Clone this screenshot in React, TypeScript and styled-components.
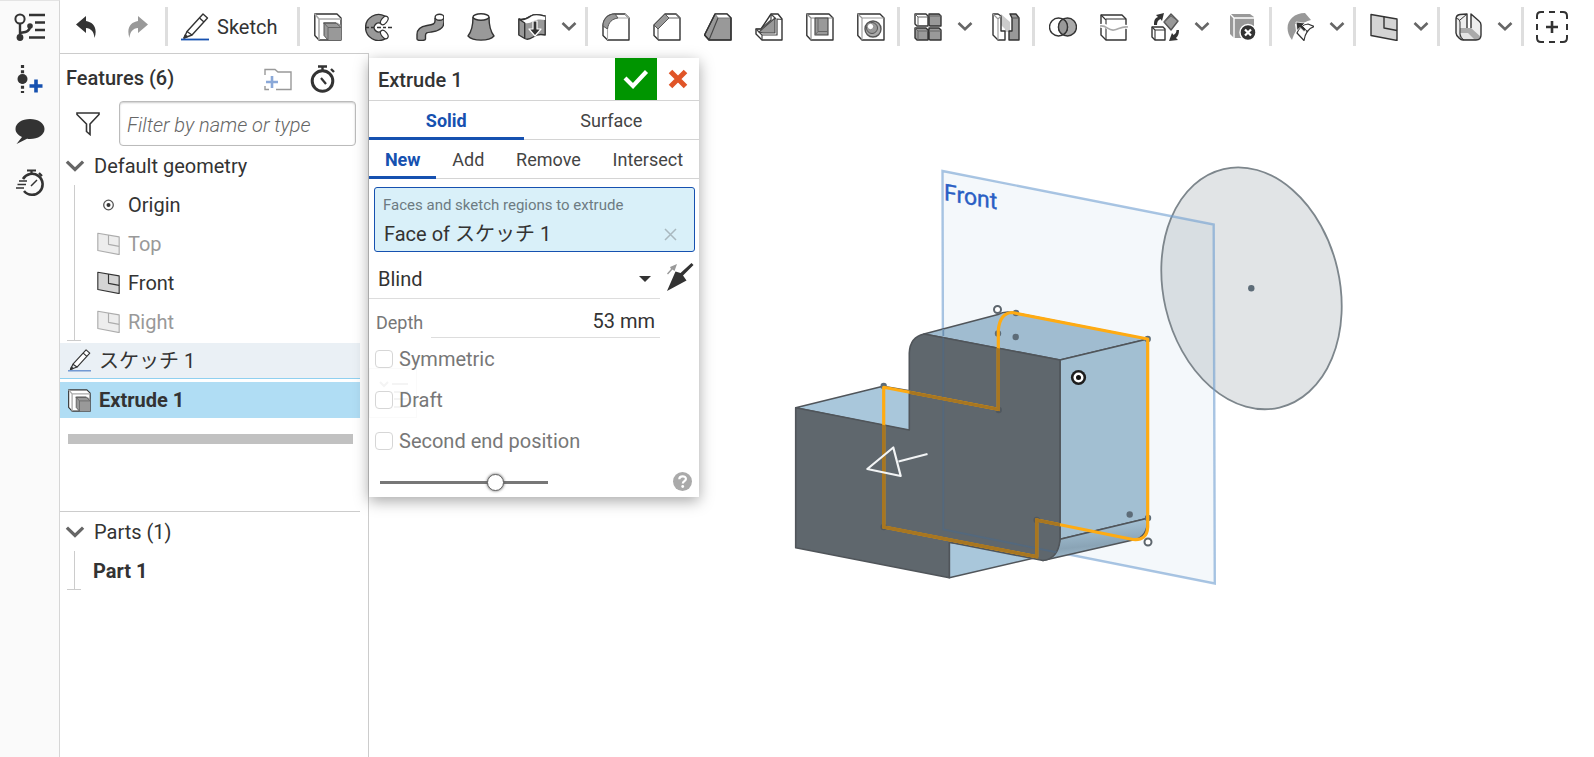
import React from "react";
import styled, { createGlobalStyle, css } from "styled-components";

const INK = "#333333";
const BLUE = "#1651b0";
const LINE = "#cccccc";

const GlobalStyle = createGlobalStyle`
  *, *::before, *::after { box-sizing: border-box; }
  body {
    margin: 0;
    background: #fff;
    color: ${INK};
    font: 400 20px/24px Roboto, "Noto Sans CJK JP", sans-serif;
  }
  button, input, select { font: inherit; color: inherit; }
  button { background: none; border: 0; padding: 0; cursor: pointer; }
  h1, h2, ul { margin: 0; padding: 0; font-weight: 400; font-size: 20px; }
  ul { list-style: none; }
`;

/* ---------- layout ---------- */

const Shell = styled.div`
  display: flex;
  min-height: 100vh;
`;

const Rail = styled.nav`
  display: flex;
  flex-direction: column;
  flex: none;
  width: 60px;
  background: #fafafa;
  border-top: 1px solid #e4e4e4;
  border-right: 1px solid #d6d6d6;
`;

const RailButton = styled.button`
  display: grid;
  place-items: center;
  height: 52px;
`;

const Main = styled.div`
  display: flex;
  flex-direction: column;
  flex: 1;
  min-width: 0;
`;

const Toolbar = styled.div`
  display: flex;
  align-items: center;
  height: 53px;
`;

const ToolButton = styled.button<{ $history?: boolean }>`
  display: grid;
  place-items: center;
  flex: none;
  width: ${(p) => (p.$history ? 52 : 51)}px;
  height: 52px;
`;

const MenuButton = styled.button`
  display: grid;
  place-items: center;
  flex: none;
  width: 27px;
  height: 52px;
  padding-right: 3px;
`;

const SketchButton = styled.button`
  display: flex;
  align-items: center;
  flex: none;
  gap: 8px;
  height: 52px;
  padding: 0 19px 0 11px;
`;

const Divider = styled.span`
  flex: none;
  width: 3px;
  height: 39px;
  margin: 0 2px 0 1px;
  background: #dedede;
`;

const Workspace = styled.div`
  display: flex;
  flex: 1;
`;

const Panel = styled.aside`
  display: flex;
  flex-direction: column;
  flex: none;
  width: 309px;
  border-top: 1px solid ${LINE};
  border-right: 1px solid ${LINE};
`;

const Viewport = styled.main`
  position: relative;
  display: flex;
  flex: 1;
  min-width: 0;
`;

const Scene = styled.svg`
  display: block;
  flex: 1;
  min-width: 0;
  width: 100%;
`;

/* ---------- feature list ---------- */

const PanelHeader = styled.header`
  display: flex;
  align-items: center;
  height: 47px;
  padding: 0 32px 0 6px;
  gap: 18px;
`;

const PanelTitle = styled.h2`
  flex: 1;
  font-weight: 500;
`;

const HeaderIcon = styled.button`
  display: grid;
  place-items: center;
  padding-top: 3px;
`;

const FilterRow = styled.div`
  display: flex;
  align-items: center;
  gap: 19px;
  padding: 0 12px 0 16px;
`;

const FilterInput = styled.input`
  flex: 1;
  min-width: 0;
  height: 45px;
  padding: 2px 7px 0;
  border: 1px solid #bbb;
  border-radius: 4px;
  box-shadow: inset 0 1px 2px #ccc;
  outline: 0;
  &::placeholder {
    color: #666;
    font-size: 20px;
    font-style: italic;
    font-weight: 300;
    opacity: 1;
  }
`;

const GroupToggle = styled.button`
  display: flex;
  align-items: center;
  gap: 9px;
  width: 100%;
  height: 39px;
  padding-left: 5px;
  text-align: left;
`;

const Branch = styled.ul`
  position: relative;
  margin: 0 0 2px 14px;
  border-left: 1px solid ${LINE};
  &::after {
    content: "";
    position: absolute;
    left: -8px;
    bottom: 0;
    width: 14px;
    height: 1px;
    background: ${LINE};
  }
`;

const BranchItem = styled.li<{ $muted?: boolean; $strong?: boolean }>`
  display: flex;
  align-items: center;
  gap: 8px;
  height: 39px;
  padding-left: ${(p) => (p.$strong ? 18 : 22)}px;
  color: ${(p) => (p.$muted ? "#999" : INK)};
  font-weight: ${(p) => (p.$strong ? 700 : 400)};
  svg { opacity: ${(p) => (p.$muted ? 0.4 : 1)}; }
`;

const FeatureRow = styled.li<{ $active?: boolean }>`
  display: flex;
  align-items: center;
  gap: 8px;
  width: 300px;
  height: 36px;
  padding-left: 8px;
  margin-bottom: 3px;
  ${(p) =>
    p.$active
      ? css`background: #b0ddf4; font-weight: 700;`
      : css`background: #eaf0f5; border-bottom: 1px solid #8fd0f0;`}
`;

const FeatureScroll = styled.div`
  width: 300px;
  height: 366px;
  border-bottom: 1px solid ${LINE};
`;

const RollbackBar = styled.div`
  height: 10px;
  margin: 16px 7px 0 8px;
  background: #c1c1c1;
`;

/* ---------- extrude dialog ---------- */

const Dialog = styled.form`
  position: absolute;
  z-index: 1;
  top: 5px;
  left: 0;
  width: 330px;
  background: #fff;
  box-shadow: 0 4px 14px rgba(0, 0, 0, 0.35);
`;

const DialogHeader = styled.header`
  display: flex;
  height: 43px;
  border-bottom: 1px solid #d4d4d4;
`;

const DialogTitle = styled.h1`
  flex: 1;
  padding-left: 9px;
  line-height: 44px;
  font-weight: 500;
`;

const HeaderButton = styled.button<{ $accept?: boolean }>`
  display: grid;
  place-items: center;
  width: 42px;
  height: 42px;
  background: ${(p) => (p.$accept ? "#009500" : "transparent")};
`;

const Tabs = styled.div`
  display: flex;
  height: 39px;
  border-bottom: 1px solid #d4d4d4;
`;

const Tab = styled.button<{ $active?: boolean; $pad: number }>`
  flex: 1 1 auto;
  height: 39px;
  padding: 4px ${(p) => p.$pad}px 0;
  border-bottom: 3px solid transparent;
  font-size: 18px;
  color: #444;
  ${(p) =>
    p.$active &&
    css`
      border-color: ${BLUE};
      color: ${BLUE};
      font-weight: 700;
    `}
`;

const Selection = styled.div`
  height: 65px;
  margin: 8px 4px 0 5px;
  padding: 5px 17px 0 8px;
  border: 1px solid ${BLUE};
  border-radius: 3px;
  background: #d9f0f9;
`;

const SelectionLabel = styled.div`
  font-size: 15px;
  color: #6d7b82;
`;

const SelectionItem = styled.div`
  display: flex;
  align-items: center;
  justify-content: space-between;
  height: 34px;
  padding-left: 1px;
`;

const EndRow = styled.div`
  display: flex;
  align-items: center;
  gap: 6px;
  margin-top: 7px;
  padding-right: 5px;
`;

const SelectWrap = styled.label`
  display: flex;
  align-items: center;
  flex: 1;
  height: 40px;
  padding-right: 9px;
  border-bottom: 1px solid #ddd;
`;

const Select = styled.select`
  flex: 1;
  appearance: none;
  height: 39px;
  margin-right: -20px;
  padding: 0 20px 0 9px;
  border: 0;
  background: transparent;
  outline: 0;
`;

const DepthRow = styled.label`
  display: flex;
  align-items: stretch;
  gap: 8px;
  height: 39px;
  padding: 4px 39px 0 7px;
  color: #777;
  font-size: 18px;
  line-height: 40px;
`;

const DepthInput = styled.input`
  flex: 1;
  min-width: 0;
  padding: 2px 5px 0 0;
  border: 0;
  border-bottom: 1px solid #ddd;
  outline: 0;
  color: ${INK};
  font-size: 20px;
  text-align: right;
`;

const CheckRow = styled.label`
  display: flex;
  align-items: center;
  gap: 6px;
  height: 41px;
  padding-left: 6px;
  color: #777;
`;

const CheckBox = styled.input`
  appearance: none;
  width: 18px;
  height: 18px;
  margin: 0;
  border: 1px solid #d6d6d6;
  border-radius: 4px;
  background: #fff;
`;

const DialogFooter = styled.footer`
  display: flex;
  align-items: center;
  justify-content: space-between;
  height: 36px;
  padding: 4px 7px 0 11px;
`;

const Slider = styled.input`
  appearance: none;
  width: 168px;
  height: 18px;
  margin: 2px 0 0;
  background: linear-gradient(#777, #777) center / 100% 3px no-repeat;
  &::-webkit-slider-thumb {
    appearance: none;
    width: 17px;
    height: 17px;
    border: 1px solid #666;
    border-radius: 50%;
    background: #fff;
    box-shadow: 0 0 3px #555;
  }
`;

const HelpButton = styled.button`
  display: grid;
  place-items: center;
`;

const ListGhost = styled.span`
  position: absolute;
  z-index: -1;
  left: 0;
  top: 310px;
  width: 48px;
  height: 50px;
  border: 1px solid #fafafa;
  pointer-events: none;
`;

/* ---------- icons ---------- */

type IconProps = { size?: number; children: React.ReactNode };

const Icon = ({ size = 28, children }: IconProps) => (
  <svg
    width={size}
    height={size}
    viewBox="0 0 28 28"
    fill="none"
    stroke={INK}
    strokeWidth="1.4"
    strokeLinejoin="round"
    aria-hidden="true"
  >
    {children}
  </svg>
);

const Chevron = ({ wide }: { wide?: boolean }) => (
  <svg width={wide ? 20 : 16} height={wide ? 14 : 11} viewBox="0 0 16 11" fill="none" aria-hidden="true">
    <path d="M1.5 2 8 8.3 14.5 2" stroke="#666" strokeWidth="2.6" />
  </svg>
);

const G = "#999";

const ExtrudeIcon = ({ size }: { size?: number }) => (
  <Icon size={size}>
    <path d="M.8 1H23l4 4v22H5l-4.200-4.500Z" fill="#fff" />
    <path d="M.8 1 5 6v21M5 6h22" stroke="#aaa" strokeWidth="1.600" />
    <path d="M10 9.500h13l4 2.500v15H14l-4-4.500Z" fill={G} stroke="none" />
    <path d="m10 10 4 4.500V27m0-12.500h13M10 10h12l5 4.500" stroke="#666" strokeWidth="1" />
    <path d="M10 10v12.500l4 4.500M9 10h13" stroke="#555" strokeWidth="1" />
  </Icon>
);

const RevolveIcon = () => (
  <Icon>
    <path d="M20 3.200A13 13 0 1 0 20 25.800L16.500 18a4.500 4.500 0 1 1 0-7Z" fill={G} />
    <ellipse cx="19.300" cy="7.500" rx="2.800" ry="4.800" transform="rotate(40 19.300 7.500)" fill="#fff" strokeWidth="1.200" />
    <ellipse cx="19.300" cy="21.500" rx="2.800" ry="4.800" transform="rotate(-40 19.300 21.500)" fill="#fff" strokeWidth="1.200" />
    <path d="M1 14.500h3m2 0h3m3 0h4m2 0h3m2 0h4" />
  </Icon>
);

const SweepIcon = () => (
  <Icon>
    <path d="M19 5v3c0 3-2 3.500-8 4.500-6 1-10 3-10 9V26c0 2 8 2 8.500 0v-3.500c0-3 2-3 6-3.500 8-1 12.500-4 12.500-10V4" fill={G} />
    <ellipse cx="23.500" cy="4.300" rx="4.400" ry="3" fill="#fff" />
  </Icon>
);

const LoftIcon = () => (
  <Icon>
    <path d="M6 4c0 8-1 14-5 19 5 5.500 21 5.500 26 0-4-5-5-11-5-19" fill={G} />
    <ellipse cx="14" cy="4" rx="8" ry="3.200" fill="#fff" />
  </Icon>
);

const ThickenIcon = () => (
  <Icon>
    <path d="M.8 6c5 2 9-1 12-3 5-3 9-1 14.400 0v19c-5-1-9-.5-12 2-3 2-6 3-8.500 1.500L.8 22Z" fill={G} />
    <path d="M.8 6c5 2 9-1 12-3 5-3 9-1 14.400 0v4c-5-1-9-.5-12 1-3 2-5 2.500-8.500 2Z" fill="#fff" stroke="none" />
    <path d="M.8 6c5 2 9-1 12-3 5-3 9-1 14.400 0M.8 6l5.900 4v15" />
    <path d="M15 8h4v8h4l-6 7-6-7h4Z" fill={INK} stroke="#fff" strokeWidth="1.200" />
  </Icon>
);

const FilletIcon = () => (
  <Icon>
    <path d="M1 13C1 6 6 1 13 1h10l4 4v22H5.500L1 22.500Z" fill="#fff" />
    <path d="M1 13C1 6 6 1 13 1l3 4C10 6 6.500 9 5.500 16Z" fill={G} stroke="#555" strokeWidth="1" />
    <path d="M16 5h11m-4-4 4 4M5.500 16v11" stroke="#aaa" strokeWidth="1.100" />
  </Icon>
);

const ChamferIcon = () => (
  <Icon>
    <path d="M1 12 12 1h11l4 4v22H5.500L1 22.500Z" fill="#fff" />
    <path d="M1 12 12 1l4 4L5 16Z" fill={G} stroke="#555" strokeWidth="1" />
    <path d="M16 5h11m-4-4 4 4M5 16v11" stroke="#666" strokeWidth="1.100" />
  </Icon>
);

const DraftIcon = () => (
  <Icon>
    <path d="M11 1h12l4 4v22H5l-4.500-5Z" fill={G} />
    <path d="m11 1 3 4h13l-4-4Z" fill="#fff" stroke="#777" strokeWidth="1" />
    <path d="M5 27l9-22" stroke="#444" strokeWidth="1.100" />
    <path d="M11 1h12l4 4v22H5l-4.500-5Z" strokeWidth="1.200" />
  </Icon>
);

const RibIcon = () => (
  <Icon>
    <path d="M16 1h7l4 5v21H7l-6-6v-5h5Z" fill="#fff" />
    <path d="M4 19 20 5v15H8Z" fill={G} stroke="#444" strokeWidth="1.100" />
    <path d="M16 1v6L6 16H1l6 6m0 0v5m0-5h15V6l5 .5M16 1l5 5" stroke="#444" strokeWidth="1.200" />
  </Icon>
);

const ShellIcon = () => (
  <Icon>
    <path d="M.8 1H23l4 4v22H5l-4.200-4.500Z" fill="#fff" />
    <path d="M.8 1 5 5v22M5 5h22" stroke="#888" strokeWidth="1.100" />
    <path d="M9 5h13v17H9Z" fill={G} stroke="#444" strokeWidth="1.100" />
    <path d="M12 5v13.500h10M9 22l3-3.500" stroke="#666" strokeWidth="1" />
  </Icon>
);

const HoleIcon = () => (
  <Icon>
    <path d="M.8 1H23l4 4v22H5l-4.200-4.500Z" fill="#fff" />
    <path d="M.8 1 5 5v22M5 5h22" stroke="#999" strokeWidth="1.100" />
    <circle cx="16" cy="16" r="8" fill="#aaa" stroke="#555" />
    <circle cx="15" cy="15" r="5.500" fill={G} stroke="#555" strokeWidth="1" />
    <circle cx="13.500" cy="13.500" r="3.200" fill="#fff" stroke="#888" strokeWidth="1" />
  </Icon>
);

const PatternIcon = () => (
  <Icon>
    <path d="M1 1h11l2 2v10H3l-2-2Z" fill="#fff" />
    <path d="M15 1h10l2 2v10H16l-1-1ZM1 15h11l2 2v10H3l-2-2ZM15 15h10l2 2v10H16l-1-1Z" fill={G} />
    <path d="m1 1 3 3v9M4 4h10M15 3h12M1 15l3 3v9m0-9h10m1 0h12" stroke="#666" strokeWidth="1" />
  </Icon>
);

const MirrorIcon = () => (
  <Icon>
    <path d="M9 1 18 9v10h-5v-3l-4-4Z" fill="#ccc" stroke="none" />
    <path d="M1 1h5l3 2v15h4v9H6l-5-5Z" fill="#fff" />
    <path d="M1 1l5 5v21M6 6l3-3" stroke="#999" strokeWidth="1.100" />
    <path d="M18 1h6l3 4v22H17v-9h3V5Z" fill={G} />
    <path d="m20 5h7" stroke="#555" strokeWidth="1" />
  </Icon>
);

const BooleanIcon = () => (
  <Icon>
    <circle cx="18.500" cy="14" r="9" fill="#aaa" />
    <circle cx="9.500" cy="14" r="9" />
    <path d="M14 6.200a9 9 0 0 1 0 15.600 9 9 0 0 1 0-15.600Z" fill={G} />
  </Icon>
);

const SplitIcon = () => (
  <Icon>
    <path d="M1 2h21l4 4v21H6l-5-5Z" fill="#fff" />
    <path d="m1 2 5 5v20M6 6h20" strokeWidth="1.100" />
    <path d="M0 13c8-2 8 4 14 3 5-1 8-3 14-2" stroke="#fff" strokeWidth="4" />
    <path d="M0 13c7-1 8 5 14 4 5-1 8-4 14-3" stroke="#aaa" strokeWidth="1.600" />
  </Icon>
);

const TransformIcon = () => (
  <Icon>
    <path d="m20 1 7 7-7 9-7-8Z" fill={G} stroke="#555" />
    <path d="m13 9 7-6 7 5" stroke="#666" strokeWidth="1" />
    <path d="M1 14h11l2 2v11H4l-3-3Z" fill="#fff" />
    <path d="m1 14 3 3v10m0-10h10" strokeWidth="1.100" />
    <path d="M3 12c0-5 1-7 4-8L5 2l8-2-2 8-1.500-2C7 7 6 9 6 12Z" fill={INK} stroke="none" />
    <path d="M28 17c0 4-1 6-3 8l2 2-9 1 3-8 1.500 2c2-1 3-3 3-5Z" fill={INK} stroke="none" />
  </Icon>
);

const DeleteIcon = () => (
  <Icon>
    <path d="M1 1h20l4 3v21H5l-4-4Z" fill={G} stroke="none" />
    <path d="m1 1 4 4h20M5 5v20" stroke="#fff" strokeWidth="1.400" />
    <circle cx="19" cy="19.500" r="8" fill={INK} stroke="#fff" />
    <path d="m16 16.500 6 6m0-6-6 6" stroke="#fff" strokeWidth="2.200" />
  </Icon>
);

const MoveFaceIcon = () => (
  <Icon>
    <path d="M6 27C-4 14 4 0 19 0l6 7c-5 1-8 3-9 5l-7-1 1 7c-2 3-3 6-4 9Z" fill={G} stroke="none" />
    <path d="M11 20c2-5 6-8.500 11-9l6 2.500c-6 2-9 7-10 14Z" fill="#fff" strokeWidth="1.200" />
    <path d="m16 14.500 6 4.500" strokeWidth="1.200" />
    <path d="m10 9 9 1-2.500 2.500 4 4-2.500 2-4-4-3 3Z" fill={INK} stroke="#fff" strokeWidth=".8" />
  </Icon>
);

const PlaneIcon = ({ size }: { size?: number }) => (
  <Icon size={size}>
    <path d="M1 1.500 27 6v21.500L1 22.500Z" fill="#d4d4d4" />
    <path d="M14 3.500V15l13 2.500" />
  </Icon>
);

const SheetMetalIcon = () => (
  <Icon>
    <path d="M2 6q0-4 4-4.500L13 1v14l4 0V1l8 7q2 1.500 2 4v10q0 5-5 5H9q-2 0-4-2t-3-5Z" fill="#eee" stroke="none" />
    <path d="M6 15h11l10 9-4 3H9l-4-3Z" fill="#aaa" stroke="none" />
    <path d="M6 20h8l6 6H9Z" fill="#e4e4e4" stroke="none" />
    <path d="M13 15V1L6 1.500Q2 2 2 6v14q0 2 3 5 2 2 4 2h13q5 0 5-5V12q0-2.500-2-4l-8-7v14" />
    <path d="M2 5q4 1 4 4v12q0 4 4 6M6 7l7-6" strokeWidth="1" />
  </Icon>
);

const AddCustomIcon = () => (
  <svg width="32" height="32" viewBox="0 0 32 32" fill="none" stroke={INK} strokeWidth="2" aria-hidden="true">
    <path d="M1 8V5q0-4 4-4h3M13 1h6M24 1h3q4 0 4 4v3M31 13v6M31 24v3q0 4-4 4h-3M19 31h-6M8 31H5q-4 0-4-4v-3M1 19v-6" />
    <path d="M16 10v12m-6-6h12" strokeWidth="2.600" />
  </svg>
);

const UndoIcon = ({ redo }: { redo?: boolean }) => (
  <svg width="22" height="24" viewBox="0 0 22 24" aria-hidden="true">
    <path
      transform={redo ? "matrix(-1 0 0 1 22 0)" : undefined}
      fill={redo ? "#999" : INK}
      d="M1 9.500 11 1v5c7 1 12 7 8.500 17C19 16.500 16 13.500 11 13v5Z"
    />
  </svg>
);

const PencilIcon = ({ size = 28, base = "#1651b0" }: { size?: number; base?: string }) => (
  <Icon size={size}>
    <path d="m22 1 4.500 4L11 22l-5-3.500Z" fill="#fff" />
    <path d="m18.500 5 4.500 4M6 18.500 3 25l8-3" />
    <path d="m3 25 1.200-3 2 1.600Z" fill={INK} />
    <path d="M0 26.500h28" stroke={base} strokeWidth="1.800" />
  </Icon>
);

const FolderIcon = () => (
  <svg width="28" height="23" viewBox="0 0 28 23" fill="none" stroke="#999" strokeWidth="1.400" aria-hidden="true">
    <path d="M1 7V1.500h10L14 4h13v17.500H12M1 18v3.500h4" />
    <path d="M8 8v12m-6-6h12" stroke="#8aa8d8" strokeWidth="2.600" />
  </svg>
);

const StopwatchIcon = () => (
  <svg width="26" height="28" viewBox="0 0 26 28" fill="none" stroke={INK} strokeWidth="3" aria-hidden="true">
    <circle cx="12.500" cy="16" r="10.300" />
    <path d="M8 1.500h9M12.500 1v5M21 4l3 3" strokeWidth="2.400" />
    <path d="m11 13 5 6" strokeWidth="2.200" />
  </svg>
);

const FunnelIcon = () => (
  <svg width="24" height="24" viewBox="0 0 24 24" fill="none" stroke={INK} strokeWidth="1.600" aria-hidden="true">
    <path d="M1 1h22v1.500L14 12v10.500l-3.500-3V12L1 2.500Z" />
  </svg>
);

const OriginIcon = () => (
  <svg width="23" height="12" viewBox="0 0 23 12" aria-hidden="true">
    <circle cx="11.500" cy="6" r="4.800" fill="none" stroke="#555" strokeWidth="1.300" />
    <circle cx="11.500" cy="6" r="2" fill={INK} />
  </svg>
);

const TreeRailIcon = () => (
  <svg width="31" height="28" viewBox="0 0 31 28" fill="none" stroke={INK} strokeWidth="2.400" aria-hidden="true">
    <circle cx="6" cy="6" r="4.600" strokeWidth="2" />
    <path d="M6 11v13M6 20c3-1 10 0 10-7M15 2h16M21 9.500h10M21 17h10M15 24.500h16" />
    <circle cx="6" cy="24.500" r="3.400" fill={INK} stroke="none" />
    <circle cx="16" cy="13" r="2.800" fill={INK} stroke="none" />
  </svg>
);

const PointRailIcon = () => (
  <svg width="26" height="28" viewBox="0 0 26 28" fill="none" aria-hidden="true">
    <path d="M5.500 0v28" stroke={INK} strokeWidth="3.200" strokeDasharray="3 2.200" />
    <circle cx="5.500" cy="14" r="5" fill={INK} />
    <path d="M19 14.500v13M12.500 21h13" stroke={BLUE} strokeWidth="3.600" />
  </svg>
);

const CommentRailIcon = () => (
  <svg width="30" height="27" viewBox="0 0 30 27" fill={INK} aria-hidden="true">
    <path d="M15 1c8 0 14.500 4 14.500 10S23 21 15 21c-1.500 0-2 0-3-.2L1.500 26 7 19C3 17 .5 14.500.5 11 .5 5 7 1 15 1Z" />
  </svg>
);

const TimerRailIcon = () => (
  <svg width="28" height="28" viewBox="0 0 28 28" fill="none" stroke={INK} strokeWidth="2.600" aria-hidden="true">
    <path d="M7 10a10.500 10.500 0 1 1 1 12" />
    <path d="M11 1.500h9M15.500 1v4M23 4l3 3" strokeWidth="2.200" />
    <path d="m15 17 6-6M3 12h8M1.500 15.500H10M0 19h8" strokeWidth="1.500" />
  </svg>
);

const CheckIcon = () => (
  <svg width="26" height="20" viewBox="0 0 26 20" fill="none" aria-hidden="true">
    <path d="m2 9 8 8L23.500 2.500" stroke="#fff" strokeWidth="4.200" />
  </svg>
);

const CrossIcon = () => (
  <svg width="20" height="20" viewBox="0 0 20 20" fill="none" aria-hidden="true">
    <path d="m2.500 2.500 15 15m0-15-15 15" stroke="#e05528" strokeWidth="5" />
  </svg>
);

const FlipIcon = () => (
  <svg width="28" height="30" viewBox="0 0 28 30" fill={INK} aria-hidden="true">
    <path d="m25.500 1 2 2L17 13.500l3.500 5L1 29 9.500 9.500l5 1.500Z" />
    <path d="m11 2-2.500 7-2-1.500L2 12.500 1 11.500l4-4.500-1-2Z" fill="#999" />
  </svg>
);

/* ---------- 3D scene ---------- */

const FRONT_FACE =
  "M795.700 407.700 909.300 430V353Q910 337 924 334L1060 360V540Q1058 559 1043 560.500L949.300 542.300V577.700L795.700 547.700Z";
const SKETCH_LOOP =
  "M883.700 387.300 998.300 409.300V330Q1000 313 1012 312.500L1147.700 339V527Q1147 541 1133 539.500L1036.700 520V556.700L883.700 527Z";

const Dot = ({ x, y, dim }: { x: number; y: number; dim?: boolean }) => (
  <circle cx={x} cy={y} r="3.200" fill={dim ? "#50585f" : "#5d6c78"} />
);

const ModelView = () => (
  <Scene viewBox="369 53 1225 704" preserveAspectRatio="xMinYMin meet" role="img" aria-label="Extruded part preview">
    <defs>
      <clipPath id="frontFace">
        <path d={FRONT_FACE} />
      </clipPath>
      <linearGradient id="roundEdge" x1="0.400" y1="0.200" x2=".6" y2="1">
        <stop offset="0" stopColor="#a2bfd2" />
        <stop offset=".55" stopColor="#8aa4b6" />
        <stop offset="1" stopColor="#a9c4d5" />
      </linearGradient>
    </defs>

    <path d="M942.500 171 1213.700 224.500 1214.800 583.500 943.300 529.500Z" fill="#f4f8fb" />
    <ellipse
      cx="1251.500" cy="288.300" rx="88.100" ry="122.500" transform="rotate(-13.200 1251.500 288.300)"
      fill="rgba(105,118,128,.2)" stroke="#7d868c" strokeWidth="1.800"
    />
    <path
      d="M942.500 171 1213.700 224.500 1214.800 583.500 943.300 529.500Z"
      fill="none" stroke="#6f9fd0" strokeOpacity=".6" strokeWidth="2.400"
    />
    <circle cx="1251.300" cy="288.300" r="3.200" fill="#5d6c78" />
    <text transform="translate(944 200) skewY(10)" fontSize="23" fill="#2a5fc4" stroke="#2a5fc4" strokeWidth=".4">
      Front
    </text>

    <g stroke="#50555a" strokeWidth="1.600" strokeLinejoin="round">
      <path d="M795.700 407.700 883 386.300 911 391V431Z" fill="#a9c7db" />
      <path d="M949.300 542.300V577.700L1043 556Z" fill="#a9c7db" />
      <path d="M924 334 998 314.500Q1004 311 1013 312.500L1147.700 339 1060 360Z" fill="#a0bcd0" />
      <path d="M1060 360 1147.700 339V518.300L1060 539.300Z" fill="#a2bfd2" />
      <path d="M1060 539.300 1147.700 518.300Q1148 538 1133 540L1043 560.500Q1057 557 1060 539.300Z" fill="url(#roundEdge)" />
      <path d={FRONT_FACE} fill="#5f676d" />
    </g>
    <path d="M943.300 328V529.500L1060 553" clipPath="url(#frontFace)" fill="none" stroke="#53687d" strokeWidth="1.800" />
    <path d="M943.300 329V336" stroke="#6d91b3" strokeWidth="1.800" />

    <Dot x={883.700} y={386} />
    <Dot x={1016} y={313} />
    <Dot x={998} y={333.500} />
    <Dot x={1015.700} y={337} />
    <Dot x={1147.700} y={339} />
    <Dot x={998.700} y={410} dim />
    <Dot x={883.700} y={527} dim />
    <Dot x={1036.700} y={520} dim />
    <Dot x={1129.700} y={514.500} />
    <Dot x={1148} y={518} />

    <path d={SKETCH_LOOP} fill="none" stroke="#ffab12" strokeWidth="3.200" strokeLinejoin="round" />
    <path d={SKETCH_LOOP} clipPath="url(#frontFace)" fill="none" stroke="#a87620" strokeWidth="3.400" />

    <g fill="#fff" stroke="#5d666d" strokeWidth="2">
      <circle cx="997.500" cy="309.500" r="3.500" />
      <circle cx="1148" cy="542" r="3.500" />
    </g>

    <path d="M867.300 469 893.300 447.500 900.700 476ZM898.500 461.500 927.500 454" fill="none" stroke="#f2f4f5" strokeWidth="2.200" strokeLinejoin="round" />

    <circle cx="1078.500" cy="377.500" r="7.600" fill="#1d1d1d" />
    <circle cx="1078.500" cy="377.500" r="5" fill="#fff" />
    <circle cx="1078.500" cy="377.500" r="2.500" fill="#111" />
  </Scene>
);

/* ---------- toolbar contents ---------- */

type Tool = { label: string; icon: React.ReactNode; menu?: boolean };

const TOOL_GROUPS: Tool[][] = [
  [
    { label: "Extrude", icon: <ExtrudeIcon /> },
    { label: "Revolve", icon: <RevolveIcon /> },
    { label: "Sweep", icon: <SweepIcon /> },
    { label: "Loft", icon: <LoftIcon /> },
    { label: "Thicken", icon: <ThickenIcon />, menu: true },
  ],
  [
    { label: "Fillet", icon: <FilletIcon /> },
    { label: "Chamfer", icon: <ChamferIcon /> },
    { label: "Draft face", icon: <DraftIcon /> },
    { label: "Rib", icon: <RibIcon /> },
    { label: "Shell", icon: <ShellIcon /> },
    { label: "Hole", icon: <HoleIcon /> },
  ],
  [
    { label: "Linear pattern", icon: <PatternIcon />, menu: true },
    { label: "Mirror", icon: <MirrorIcon /> },
  ],
  [
    { label: "Boolean", icon: <BooleanIcon /> },
    { label: "Split", icon: <SplitIcon /> },
    { label: "Transform", icon: <TransformIcon />, menu: true },
    { label: "Delete part", icon: <DeleteIcon /> },
  ],
  [{ label: "Move face", icon: <MoveFaceIcon />, menu: true }],
  [{ label: "Plane", icon: <PlaneIcon />, menu: true }],
  [{ label: "Sheet metal", icon: <SheetMetalIcon />, menu: true }],
  [{ label: "Add custom features", icon: <AddCustomIcon /> }],
];

const RAIL = [
  { label: "Feature list", icon: <TreeRailIcon /> },
  { label: "Insert point", icon: <PointRailIcon /> },
  { label: "Comments", icon: <CommentRailIcon /> },
  { label: "Performance", icon: <TimerRailIcon /> },
];

const PLANES = [
  { name: "Top", muted: true },
  { name: "Front", muted: false },
  { name: "Right", muted: true },
];

export default function App() {
  return (
    <>
      <GlobalStyle />
      <Shell>
        <Rail>
          {RAIL.map((r) => (
            <RailButton key={r.label} aria-label={r.label}>
              {r.icon}
            </RailButton>
          ))}
        </Rail>
        <Main>
          <Toolbar role="toolbar">
            <ToolButton $history aria-label="Undo"><UndoIcon /></ToolButton>
            <ToolButton $history aria-label="Redo"><UndoIcon redo /></ToolButton>
            <Divider />
            <SketchButton>
              <PencilIcon />
              Sketch
            </SketchButton>
            {TOOL_GROUPS.map((group, i) => (
              <React.Fragment key={i}>
                <Divider />
                {group.map((tool) => (
                  <React.Fragment key={tool.label}>
                    <ToolButton aria-label={tool.label}>{tool.icon}</ToolButton>
                    {tool.menu && (
                      <MenuButton aria-label={`${tool.label} menu`}>
                        <Chevron />
                      </MenuButton>
                    )}
                  </React.Fragment>
                ))}
              </React.Fragment>
            ))}
          </Toolbar>

          <Workspace>
            <Panel>
              <PanelHeader>
                <PanelTitle>Features (6)</PanelTitle>
                <HeaderIcon aria-label="Add folder"><FolderIcon /></HeaderIcon>
                <HeaderIcon aria-label="Regeneration times"><StopwatchIcon /></HeaderIcon>
              </PanelHeader>
              <FilterRow>
                <FunnelIcon />
                <FilterInput aria-label="Filter features" placeholder="Filter by name or type" />
              </FilterRow>
              <FeatureScroll>
                <GroupToggle>
                  <Chevron wide />
                  Default geometry
                </GroupToggle>
                <Branch>
                  <BranchItem><OriginIcon />Origin</BranchItem>
                  {PLANES.map((p) => (
                    <BranchItem key={p.name} $muted={p.muted}>
                      <PlaneIcon size={23} />
                      {p.name}
                    </BranchItem>
                  ))}
                </Branch>
                <ul>
                  <FeatureRow><PencilIcon size={23} base="#6f96d2" />スケッチ 1</FeatureRow>
                  <FeatureRow $active><ExtrudeIcon size={23} />Extrude 1</FeatureRow>
                </ul>
                <RollbackBar />
              </FeatureScroll>
              <GroupToggle>
                <Chevron wide />
                Parts (1)
              </GroupToggle>
              <Branch>
                <BranchItem $strong>Part 1</BranchItem>
              </Branch>
            </Panel>

            <Viewport>
              <ModelView />
              <Dialog onSubmit={(e) => e.preventDefault()}>
                <ListGhost>
                  <svg width="46" height="48" viewBox="0 0 46 48" fill="none" stroke="#f4f4f4" strokeWidth="2" aria-hidden="true">
                    <path d="m10 13 4 4 4-4M22 15h16M24 23h14M24 30h14M24 38h14" />
                  </svg>
                </ListGhost>
                <DialogHeader>
                  <DialogTitle>Extrude 1</DialogTitle>
                  <HeaderButton $accept aria-label="Accept"><CheckIcon /></HeaderButton>
                  <HeaderButton type="button" aria-label="Cancel"><CrossIcon /></HeaderButton>
                </DialogHeader>
                <Tabs>
                  <Tab type="button" $pad={48} $active>Solid</Tab>
                  <Tab type="button" $pad={48}>Surface</Tab>
                </Tabs>
                <Tabs>
                  <Tab type="button" $pad={14} $active>New</Tab>
                  <Tab type="button" $pad={14}>Add</Tab>
                  <Tab type="button" $pad={14}>Remove</Tab>
                  <Tab type="button" $pad={14}>Intersect</Tab>
                </Tabs>
                <Selection>
                  <SelectionLabel>Faces and sketch regions to extrude</SelectionLabel>
                  <SelectionItem>
                    Face of スケッチ 1
                    <button type="button" aria-label="Remove selection">
                      <svg width="13" height="13" viewBox="0 0 13 13" stroke="#a9b8bf" strokeWidth="1.500" aria-hidden="true">
                        <path d="m1 1 11 11m0-11L1 12" />
                      </svg>
                    </button>
                  </SelectionItem>
                </Selection>
                <EndRow>
                  <SelectWrap>
                    <Select aria-label="End type" defaultValue="Blind">
                      <option>Blind</option>
                    </Select>
                    <svg width="12" height="6" viewBox="0 0 12 6" aria-hidden="true">
                      <path d="M0 0h12L6 6Z" fill={INK} />
                    </svg>
                  </SelectWrap>
                  <button type="button" aria-label="Opposite direction"><FlipIcon /></button>
                </EndRow>
                <DepthRow>
                  Depth
                  <DepthInput defaultValue="53 mm" />
                </DepthRow>
                <CheckRow><CheckBox type="checkbox" />Symmetric</CheckRow>
                <CheckRow><CheckBox type="checkbox" />Draft</CheckRow>
                <CheckRow><CheckBox type="checkbox" />Second end position</CheckRow>
                <DialogFooter>
                  <Slider type="range" aria-label="Preview opacity" min="0" max="100" defaultValue="71" />
                  <HelpButton type="button" aria-label="Help">
                    <svg width="19" height="19" viewBox="0 0 19 19" fill="none" aria-hidden="true">
                      <circle cx="9.500" cy="9.500" r="9.500" fill="#aaa" />
                      <path d="M6.300 7.300c0-4 6.600-3.800 6.600-.4 0 2.200-3.100 2.200-3.100 4.600" stroke="#fff" strokeWidth="2.200" />
                      <circle cx="9.700" cy="14.500" r="1.400" fill="#fff" />
                    </svg>
                  </HelpButton>
                </DialogFooter>
              </Dialog>
            </Viewport>
          </Workspace>
        </Main>
      </Shell>
    </>
  );
}
